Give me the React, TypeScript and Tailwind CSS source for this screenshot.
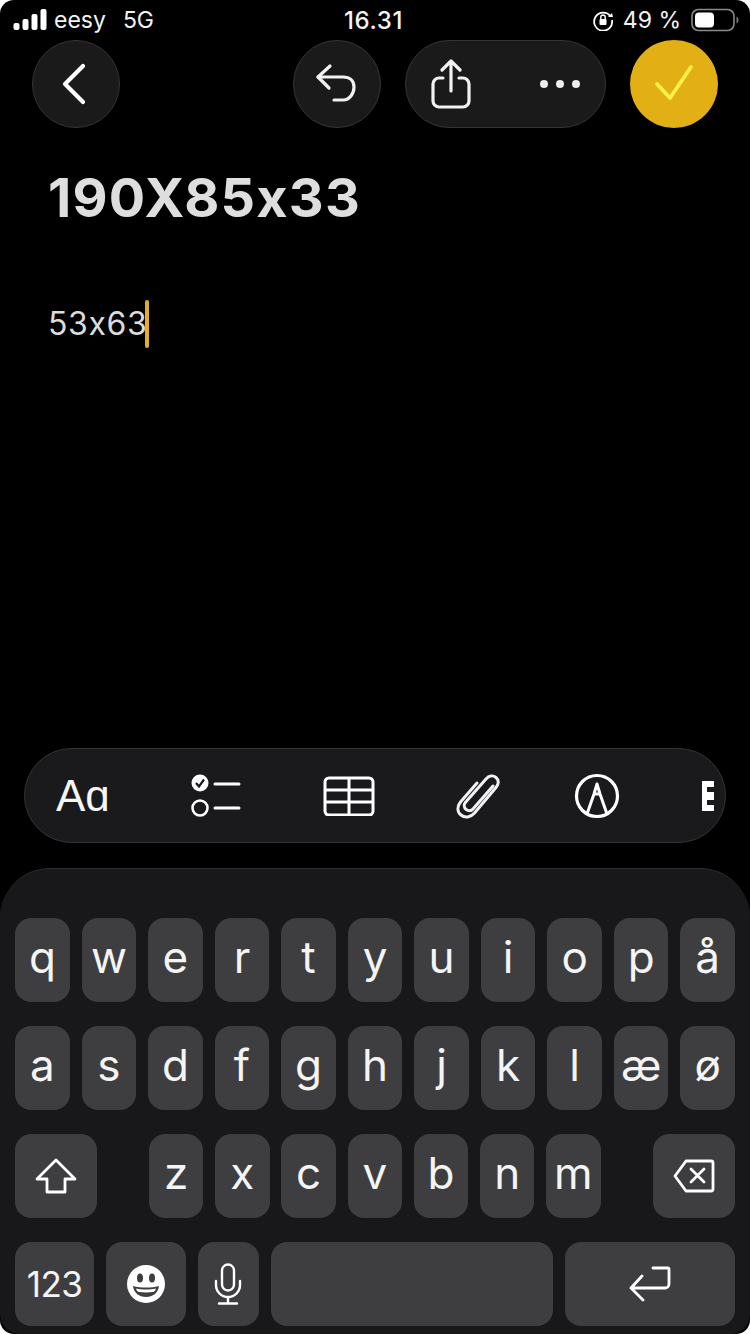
const Key = ({ label, className = "" }: { label?: string; className?: string }) => (
  <div className={`h-[84px] rounded-[16px] bg-[#3e3e40] flex items-center justify-center text-[#f4f4f4] text-[44px] leading-none pb-[7px] ${className}`}>{label}</div>
);

const Row = ({ keys }: { keys: string[] }) => (
  <div className="grid grid-cols-11 gap-x-[11.8px]">
    {keys.map((k) => <Key key={k} label={k} />)}
  </div>
);

const Circle = ({ children, className = "" }: { children: React.ReactNode; className?: string }) => (
  <div className={`w-[88px] h-[88px] rounded-full bg-[#1a1a1a] border border-[#353535] flex items-center justify-center ${className}`}>{children}</div>
);

export default function App() {
  return (
    <div className="w-[750px] h-[1334px] bg-white overflow-hidden [font-feature-settings:'calt'_0]" style={{ fontFamily: "Inter, 'Liberation Sans', sans-serif" }}>
      <div className="w-full h-full bg-black rounded-[14px] overflow-hidden flex flex-col relative">
        {/* status bar */}
        <div className="h-[40px] shrink-0 flex items-center justify-between pl-[13px] pr-[11px] text-[#f2f2f2] text-[23px] leading-none relative">
          <div className="flex items-center">
            <svg width="34" height="22" viewBox="0 0 34 22" fill="#fff"><rect x="0.5" y="14" width="6" height="7" rx="2"/><rect x="9.5" y="10" width="6" height="11" rx="2"/><rect x="18.5" y="5" width="6" height="16" rx="2"/><rect x="27.5" y="0" width="6" height="21" rx="2"/></svg>
            <span className="ml-[7px]">eesy</span>
            <span className="ml-[17px]">5G</span>
          </div>
          <span className="absolute left-[344px] top-[9px] text-[24px] font-medium tracking-[0.6px]">16.31</span>
          <div className="flex items-center">
            <svg width="22" height="22" viewBox="0 0 22 22" fill="none" stroke="#fff" strokeWidth="1.8"><path d="M18.5 7.5A9 9 0 1 0 20 11"/><path d="M16 8h5l-1-4z" fill="#fff" stroke="none"/><rect x="7.5" y="10" width="7" height="6" rx="1" fill="#fff" stroke="none"/><path d="M8.8 10V8.2a2.2 2.2 0 0 1 4.4 0V10" strokeWidth="1.4"/></svg>
            <span className="ml-[9px]">49 %</span>
            <svg className="ml-[10px]" width="48" height="24" viewBox="0 0 48 24" fill="none"><rect x="1" y="1.5" width="42" height="21" rx="6.5" stroke="#8a8a8a" strokeWidth="1.6"/><rect x="4" y="4.5" width="19" height="15" rx="4" fill="#fff"/><path d="M45.5 8.5c1.5.6 2 2 2 3.5s-.5 2.900-2 3.500z" fill="#777"/></svg>
          </div>
        </div>

        {/* nav */}
        <div className="h-[88px] shrink-0 flex items-center pl-[32px] pr-[32px]">
          <Circle>
            <svg className="mr-[4px]" width="40" height="44" viewBox="0 0 40 44" fill="none" stroke="#fff" strokeWidth="4.200" strokeLinecap="round" strokeLinejoin="round"><path d="M29 4 11 22l18 18"/></svg>
          </Circle>
          <Circle className="ml-[173px]">
            <svg width="46" height="44" viewBox="0 0 46 44" fill="none" stroke="#f2f2f2" strokeWidth="3.200" strokeLinecap="round" strokeLinejoin="round"><path d="M16 4 4 15l11 11"/><path d="M4 15h25c7 0 11 4 11 10s-4 13-11 13H20"/></svg>
          </Circle>
          <div className="ml-[24px] w-[201px] h-[88px] rounded-[44px] bg-[#1a1a1a] border border-[#353535] flex items-center pl-[25px]">
            <svg width="40" height="50" viewBox="0 0 40 50" fill="none" stroke="#f2f2f2" strokeWidth="3.200" strokeLinecap="round" strokeLinejoin="round"><path d="M20 3v29M11 11l9-9 9 9"/><path d="M12 19H8a6 6 0 0 0-6 6v17a6 6 0 0 0 6 6h24a6 6 0 0 0 6-6V25a6 6 0 0 0-6-6h-4"/></svg>
            <div className="ml-[69px] flex gap-[8px]">
              <span className="w-[8px] h-[8px] rounded-full bg-[#eeeeee]"/><span className="w-[8px] h-[8px] rounded-full bg-[#eeeeee]"/><span className="w-[8px] h-[8px] rounded-full bg-[#eeeeee]"/>
            </div>
          </div>
          <div className="ml-[24px] w-[88px] h-[88px] rounded-full bg-[#e2af14] flex items-center justify-center">
            <svg width="40" height="40" viewBox="0 0 40 40" fill="none" stroke="#fdf046" strokeWidth="3.800" strokeLinecap="round" strokeLinejoin="round"><path d="M3 20l13 14L37 3"/></svg>
          </div>
        </div>

        {/* note */}
        <div className="pl-[48px] flex-1">
          <div className="mt-[37px] text-[54px] leading-[66px] font-bold text-[#dedede] tracking-[1.2px]">190X85x33</div>
          <div className="mt-[69px] flex items-center h-[48px]">
            <span className="text-[32px] leading-none text-[#dcdcdc] tracking-[0.6px]">53x63</span>
            <span className="w-[4px] h-[48px] rounded-full bg-[#e2af2c] -ml-[2px]"/>
          </div>
        </div>

        {/* toolbar */}
        <div className="mx-[24px] h-[95px] shrink-0 rounded-[48px] bg-[#1a1a1c] border border-[#343436] flex items-center pl-[31px] overflow-hidden">
          <span className="text-[44px] leading-none text-[#f5f5f5] w-[58px]" style={{ fontFamily: "'Liberation Sans', sans-serif" }}>Aɑ</span>
          <svg className="ml-[76px]" width="52" height="46" viewBox="0 0 52 46" fill="none"><circle cx="10" cy="10" r="8.500" fill="#fff"/><path d="M6 10l3 3.500 5-7" stroke="#1a1a1c" strokeWidth="2.200" fill="none"/><circle cx="10" cy="35" r="7.500" stroke="#fff" strokeWidth="2.600"/><path d="M25 11h24M25 35h24" stroke="#fff" strokeWidth="3" strokeLinecap="round"/></svg>
          <svg className="ml-[81px]" width="52" height="40" viewBox="0 0 52 40" fill="none" stroke="#fff" strokeWidth="3"><rect x="2" y="2" width="48" height="37" rx="4"/><path d="M2 14h48M2 26h48M26 2v37"/></svg>
          <svg className="ml-[81px]" width="44" height="48" viewBox="0 0 44 48" fill="none" stroke="#f2f2f2" strokeWidth="3" strokeLinecap="round" strokeLinejoin="round"><path d="M37 14 17 37c-2 2.500-5 2-7 .3s-2.500-4.500-.5-7L30 7c3-3.500 7-4 10-1.500s3 6.500 0 10L18.500 41c-4 4.500-9.500 5.500-13.500 2s-4-8.500-.5-13L21 11"/></svg>
          <svg className="ml-[74px]" width="46" height="46" viewBox="0 0 46 46" fill="none" stroke="#fff" strokeWidth="3.200"><circle cx="23" cy="23" r="20.500"/><path d="M13 41l7-20h6l7 20M20 21l3-10 3 10" strokeWidth="3" strokeLinejoin="round"/></svg>
          <svg className="ml-[82px] shrink-0" width="12" height="30" viewBox="0 0 12 30"><rect width="12" height="30" fill="#fff"/><rect x="5" y="6" width="7" height="5" fill="#1a1a1c"/><rect x="5" y="19" width="7" height="5" fill="#1a1a1c"/></svg>
        </div>

        {/* keyboard */}
        <div className="mt-[25px] h-[466px] shrink-0 rounded-t-[50px] rounded-b-[20px] bg-[#18181a] border-t border-[#2e2e30] px-[15px] pt-[49px] flex flex-col gap-[24px]">
          <Row keys={["q","w","e","r","t","y","u","i","o","p","å"]} />
          <Row keys={["a","s","d","f","g","h","j","k","l","æ","ø"]} />
          <div className="flex">
            <div className="w-[82px] h-[84px] rounded-[16px] bg-[#3e3e40] flex items-center justify-center">
              <svg width="42" height="36" viewBox="0 0 42 36" fill="none" stroke="#fff" strokeWidth="2.800" strokeLinejoin="round"><path d="M21 2 2 21h10v13h18V21h10z"/></svg>
            </div>
            <div className="ml-[52px] flex gap-x-[11.800px]">
              {["z","x","c","v","b","n","m"].map((k) => <Key key={k} label={k} className="w-[54.400px]" />)}
            </div>
            <div className="ml-auto w-[82px] h-[84px] rounded-[16px] bg-[#3e3e40] flex items-center justify-center">
              <svg width="42" height="34" viewBox="0 0 42 34" fill="none" stroke="#fff" strokeWidth="2.800" strokeLinejoin="round" strokeLinecap="round"><path d="M13 2h25a2 2 0 0 1 2 2v26a2 2 0 0 1-2 2H13L2 17z"/><path d="M18 10l13 13M31 10 18 23"/></svg>
            </div>
          </div>
          <div className="flex gap-x-[11.750px]">
            <div className="w-[79px] h-[84px] rounded-[16px] bg-[#3e3e40] flex items-center justify-center text-[35px] text-[#f4f4f4] leading-none tracking-[-0.5px]">123</div>
            <div className="w-[80px] h-[84px] rounded-[16px] bg-[#3e3e40] flex items-center justify-center">
              <svg width="38" height="38" viewBox="0 0 38 38"><circle cx="19" cy="19" r="19" fill="#fff"/><ellipse cx="13" cy="13" rx="3" ry="4.500" fill="#3e3e40"/><ellipse cx="25" cy="13" rx="3" ry="4.500" fill="#3e3e40"/><path d="M6 21c8 2 18 2 26 0-1 7-6 11-13 11S7 28 6 21z" fill="#3e3e40"/><path d="M9 23.500c6 1.300 14 1.300 20 0-.5 1.500-1 2.500-2 3.200-5 1-11 1-16 0-1-.7-1.500-1.700-2-3.200z" fill="#fff"/></svg>
            </div>
            <div className="w-[61.500px] h-[84px] rounded-[16px] bg-[#3e3e40] flex items-center justify-center">
              <svg width="28" height="42" viewBox="0 0 28 42" fill="none" stroke="#fff" strokeWidth="2.400" strokeLinecap="round"><rect x="8" y="1.500" width="12" height="26" rx="6"/><path d="M2 18v4a12 12 0 0 0 24 0v-4M14 34v6M5 40.500h18"/></svg>
            </div>
            <div className="w-[282px] h-[84px] rounded-[16px] bg-[#3e3e40]"/>
            <div className="w-[170.500px] h-[84px] rounded-[16px] bg-[#3e3e40] flex items-center justify-center">
              <svg width="42" height="36" viewBox="0 0 42 36" fill="none" stroke="#fff" strokeWidth="2.800" strokeLinecap="round" strokeLinejoin="round"><path d="M13 10 2 22l12 12M2 22h34a4 4 0 0 0 4-4V3a1 1 0 0 0-1-1H24"/></svg>
            </div>
          </div>
        </div>
      </div>
    </div>
  );
}
